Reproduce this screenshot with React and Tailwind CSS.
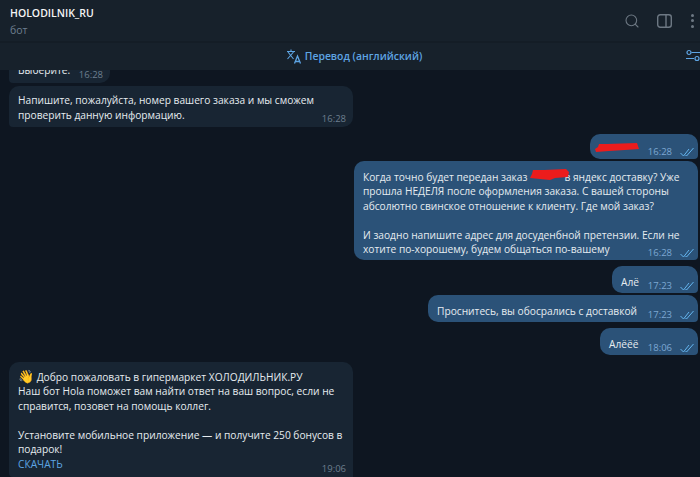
import { Search } from "lucide-react";

const DoubleCheck = () => (
  <svg width="14" height="10" viewBox="0 0 14 10" fill="none" stroke="#64b5ef" strokeWidth="1" className="ml-[8px]">
    <path d="M0.5 6 L3.5 9 L9 2" />
    <path d="M5.5 8 L6.5 9 L13.5 1" />
  </svg>
);

function Time({ value, out }) {
  return (
    <span className={`absolute flex items-center text-[9.5px] leading-[16px] ${out ? "bottom-[-1px] right-[4px] text-[#7da8d3]" : "bottom-0 right-[7px] text-[#6d7f8f]"}`}>
      {value}
      {out && <DoubleCheck />}
    </span>
  );
}

function Incoming({ children, time, className }) {
  return (
    <div className={`relative self-start ml-[9px] rounded-[10px] rounded-bl-[4px] bg-[#182533] px-[9px] pt-[7px] pb-[6px] text-[#e6ecf0] ${className}`}>
      {children}
      <Time value={time} />
    </div>
  );
}

function Outgoing({ children, time, className }) {
  return (
    <div className={`relative self-end mr-[2px] rounded-[10px] rounded-br-[4px] bg-[#2b5278] px-[9px] pt-[9px] pb-[4px] text-[#e6ecf0] ${className}`}>
      {children}
      <Time value={time} out />
    </div>
  );
}

const Scribble = ({ className, d, w, h }) => (
  <svg width={w} height={h} viewBox={`0 0 ${w} ${h}`} className={className}>
    <path d={d} fill="#ec1c1c" />
  </svg>
);

export default function App() {
  return (
    <div className="flex h-[477px] w-[700px] flex-col overflow-hidden bg-[#0e1621] font-['Open_Sans',sans-serif] text-[10.2px] leading-[14.5px]">
      <header className="flex h-[41px] shrink-0 items-center justify-between bg-[#17212b] pl-[10px] pr-[6px]">
        <div>
          <div className="text-[10.5px] font-semibold leading-[16px] text-[#f5f5f5]">HOLODILNIK_RU</div>
          <div className="mt-[2px] text-[10.5px] leading-[14px] text-[#6d7f8f]">бот</div>
        </div>
        <div className="flex items-center text-[#6d7883]">
          <Search size={16} strokeWidth={1.6} />
          <svg width="15" height="14" viewBox="0 0 15 14" fill="none" stroke="currentColor" strokeWidth="1.4" className="ml-[17px]">
            <rect x="0.7" y="0.7" width="13.6" height="12.6" rx="2.5" />
            <path d="M9 1 V13" />
          </svg>
          <div className="ml-[19px] flex flex-col gap-[2.5px]">
            <span className="h-[3px] w-[3px] rounded-full bg-current" />
            <span className="h-[3px] w-[3px] rounded-full bg-current" />
            <span className="h-[3px] w-[3px] rounded-full bg-current" />
          </div>
        </div>
      </header>
      <div className="h-[2px] shrink-0 bg-[#141d26]" />
      <div className="relative flex h-[27px] shrink-0 items-center justify-center bg-[#17212b] pl-[8px] text-[10.4px] font-semibold text-[#5ea5e4]">
        <svg width="16" height="15" viewBox="0 0 16 15" fill="none" stroke="currentColor" strokeWidth="1.1" className="mr-[3px]">
          <path d="M1 2.5 H9 M5 0.5 V2.5 M1.5 10 L7.5 3 M2 3 L7.5 10" />
          <path d="M8.5 14.5 L11.5 7 L14.5 14.5 M9.5 12.5 H13.5" strokeWidth="1.3" />
        </svg>
        Перевод (английский)
        <svg width="15" height="15" viewBox="0 0 15 15" fill="none" stroke="currentColor" strokeWidth="1.2" className="absolute -right-[1px] top-[6px]">
          <circle cx="3" cy="3.5" r="2" />
          <path d="M5.5 3.5 H15 M0 9.5 H8" />
          <circle cx="11" cy="9.5" r="2" />
        </svg>
      </div>

      <main className="flex min-h-0 flex-1 flex-col overflow-hidden">
        <Incoming time="16:28" className="-mt-[22px] h-[35px] w-[101px]">
          <p className="mt-[8px]">Выберите.</p>
        </Incoming>
        <Incoming time="16:28" className="mt-[3px] h-[41px] w-[344px]">
          <p className="whitespace-nowrap">Напишите, пожалуйста, номер вашего заказа и мы сможем<br />проверить данную информацию.</p>
        </Incoming>

        <Outgoing time="16:28" className="mt-[7px] h-[27px] w-[108px]">
          <Scribble w={44} h={9} className="absolute left-[5px] top-[9px]" d="M4 1 L12 1 L42 0 L43 3 L44 6 L30 7 L14 8 L1 9 L0 6 L3 4 Z" />
        </Outgoing>
        <Outgoing time="16:28" className="mt-[2px] h-[99px] w-[344px]">
          <p className="whitespace-nowrap">
            Когда точно будет передан заказ
            <Scribble w={39} h={11} className="absolute left-[176px] top-[8px] z-10" d="M3 1 L14 1 L36 0 L39 3 L38 8 L25 9 L20 11 L0 9 L2 5 Z" />
            <span className="ml-[37px]">в яндекс доставку? Уже</span>
            <br />
            прошла НЕДЕЛЯ после оформления заказа. С вашей стороны
            <br />
            абсолютно свинское отношение к клиенту. Где мой заказ?
            <br />
            <br />
            И заодно напишите адрес для досуденбной претензии. Если не
            <br />
            хотите по-хорошему, будем общаться по-вашему
          </p>
        </Outgoing>
        <Outgoing time="17:23" className="mt-[6px] h-[27px] w-[86px]">
          <p>Алё</p>
        </Outgoing>
        <Outgoing time="17:23" className="mt-[2px] h-[27px] w-[270px]">
          <p className="whitespace-nowrap">Проснитесь, вы обосрались с доставкой</p>
        </Outgoing>
        <Outgoing time="18:06" className="mt-[6px] h-[27px] w-[98px]">
          <p>Алёёё</p>
        </Outgoing>

        <Incoming time="19:06" className="mt-[7px] w-[344px] flex-1 rounded-b-none pt-[8px]">
          <p className="whitespace-nowrap">
            <span className="text-[13px] leading-none">👋</span> Добро пожаловать в гипермаркет ХОЛОДИЛЬНИК.РУ
            <br />
            Наш бот Hola поможет вам найти ответ на ваш вопрос, если не
            <br />
            справится, позовет на помощь коллег.
            <br />
            <br />
            Установите мобильное приложение — и получите 250 бонусов в
            <br />
            подарок!
            <br />
            <span className="text-[#5ea5e4]">СКАЧАТЬ</span>
          </p>
        </Incoming>
      </main>
    </div>
  );
}
